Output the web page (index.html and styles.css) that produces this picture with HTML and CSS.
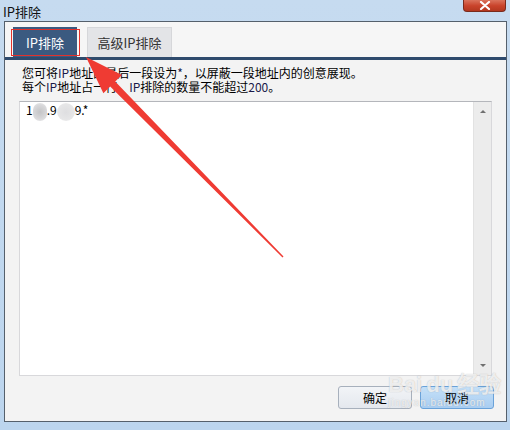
FILE: index.html
```html
<!DOCTYPE html>
<html lang="zh-CN">
<head>
  <meta charset="UTF-8">
  <title>IP排除</title>
  <link rel="stylesheet" href="styles.css">
</head>
<body>
  <div class="window">
    <div class="titlebar">
      <span class="title">IP排除</span>
      <div class="close">
        <svg width="12" height="9" viewBox="0 0 12 9"><path d="M2 1 L10 8 M10 1 L2 8" stroke="#fff" stroke-width="2.2" stroke-linecap="round"/></svg>
      </div>
    </div>

    <div class="panel">
      <div class="tabbar">
        <div class="tab active">IP排除</div>
        <div class="tab">高级IP排除</div>
      </div>

      <div class="content">
        <p class="hint">您可将<span class="latin">IP</span>地址的最后一段设为<span class="latin">*</span>，以屏蔽一段地址内的创意展现。</p>
        <p class="hint">每个<span class="latin">IP</span>地址占一行，<span class="latin">IP</span>排除的数量不能超过<span class="latin">200</span>。</p>

        <div class="editor">
          <div class="lines">1<span class="blob"></span>.9<span class="blob wide"></span>9.*</div>
          <div class="scrollbar">
            <span class="arrow up"></span>
            <span class="arrow down"></span>
          </div>
        </div>
      </div>

      <div class="footer">
        <button class="btn">确定</button>
        <button class="btn primary">取消</button>
      </div>
    </div>
  </div>

  <!-- annotation overlays -->
  <div class="mark"></div>
  <svg class="pointer" width="510" height="430" viewBox="0 0 510 430">
    <polygon points="86,57 122,75 115.2,81.6 283.5,256.5 282.5,257.5 110.2,86.6 103.4,93.2" fill="#ef3b33"/>
  </svg>
  <div class="watermark">
    <span class="wm-logo">Bai<b>du</b>经验</span>
    <span class="wm-url">jingyan.baidu.com</span>
  </div>
</body>
</html>
```

FILE: styles.css
```css
body {
  margin: 0;
  width: 510px;
  height: 430px;
  overflow: hidden;
  background: linear-gradient(180deg, #c6dbf0 0%, #bcd5ee 100%);
  font-family: "Noto Sans CJK SC", "Liberation Sans", sans-serif;
  font-size: 12px;
  color: #000;
  position: relative;
}

.window {
  height: 430px;
  display: flex;
  flex-direction: column;
}

.titlebar {
  height: 21px;
  position: relative;
  padding-left: 3px;
}

.title {
  font-size: 13px;
  line-height: 23px;
  color: #111;
}

.close {
  position: absolute;
  top: -2px;
  right: 4px;
  width: 43px;
  height: 14px;
  border: 1px solid #7a2a1c;
  border-top: none;
  border-radius: 0 0 4px 4px;
  background: linear-gradient(180deg, #e0836d 0%, #c9432b 60%, #b33820 100%);
  display: flex;
  justify-content: center;
  align-items: flex-end;
  padding-bottom: 1px;
  box-sizing: border-box;
}

.panel {
  margin: 0 3px 0 4px;
  height: 401px;
  border: 1px solid #55606c;
  background: #f3f3f3;
  display: flex;
  flex-direction: column;
  box-sizing: border-box;
}

.tabbar {
  height: 38px;
  box-sizing: border-box;
  background: #f6f6f6;
  border-bottom: 3px solid #2f4b6d;
  padding-left: 8px;
  display: flex;
  align-items: flex-end;
  gap: 10px;
}

.tab {
  height: 30px;
  width: 85px;
  box-sizing: border-box;
  background: #e3e4e7;
  border: 1px solid #d6d7da;
  border-bottom: none;
  color: #333;
  font-size: 13px;
  display: flex;
  align-items: center;
  justify-content: center;
}

.tab.active {
  width: 64px;
  background: #3b5a80;
  border-color: #3b5a80;
  color: #fff;
}

.content {
  padding: 6px 0 0 14px;
}

.hint {
  margin: 0 0 0 3px;
  line-height: 14px;
  white-space: nowrap;
}

.latin {
  color: #1a1a4a;
}

.editor {
  margin-top: 7px;
  width: 473px;
  height: 275px;
  box-sizing: border-box;
  background: #fff;
  border: 1px solid #d8d8db;
  border-top-color: #b4b6bb;
  display: flex;
}

.lines {
  flex: 1;
  padding: 1px 0 0 6px;
  line-height: 14px;
}

.blob {
  display: inline-block;
  width: 14px;
  height: 18px;
  margin: -3px 0 -3px 0;
  vertical-align: middle;
  border-radius: 7px;
  background: radial-gradient(circle, #c4c4c6 0%, #d8d8da 60%, #eeeeef 100%);
}

.blob.wide {
  width: 18px;
  border-radius: 9px;
  background: radial-gradient(circle, #dedee0 0%, #e6e6e7 60%, #f3f3f3 100%);
}

.scrollbar {
  width: 17px;
  background: #ececec;
  border-left: 1px solid #e2e2e2;
  display: flex;
  flex-direction: column;
  justify-content: space-between;
  align-items: center;
  padding: 8px 0 8px;
}

.arrow {
  width: 0;
  height: 0;
  border-left: 3px solid transparent;
  border-right: 3px solid transparent;
}

.arrow.up {
  border-bottom: 3px solid #707070;
}

.arrow.down {
  border-top: 3px solid #707070;
}

.footer {
  margin-top: auto;
  padding: 0 12px 12px 0;
  display: flex;
  justify-content: flex-end;
  gap: 8px;
}

.btn {
  width: 74px;
  height: 23px;
  font-family: inherit;
  font-size: 12px;
  color: #000;
  border: 1px solid #a7b0bc;
  border-radius: 3px;
  background: linear-gradient(180deg, #f2f4f7 0%, #e4e8ee 100%);
  padding: 0;
}

.btn.primary {
  border-color: #6aa2d9;
  background: linear-gradient(180deg, #c4e0f8 0%, #a9cdf1 100%);
}

.mark {
  position: absolute;
  left: 11px;
  top: 29px;
  width: 67px;
  height: 25px;
  border: 1px solid #e4312b;
}

.pointer {
  position: absolute;
  left: 0;
  top: 0;
  pointer-events: none;
}

.watermark {
  position: absolute;
  left: 388px;
  top: 374px;
  color: rgba(255, 255, 255, 0.75);
  text-shadow: 0 0 1px rgba(120, 120, 120, 0.5);
  pointer-events: none;
  line-height: 1;
}

.wm-logo {
  display: block;
  font-family: "Liberation Sans", sans-serif;
  font-size: 22px;
  font-weight: bold;
}

.wm-logo b {
  margin: 0 4px;
}

.wm-url {
  display: block;
  font-family: "Liberation Sans", sans-serif;
  font-size: 10px;
  margin-top: 2px;
  letter-spacing: 1px;
}
```
